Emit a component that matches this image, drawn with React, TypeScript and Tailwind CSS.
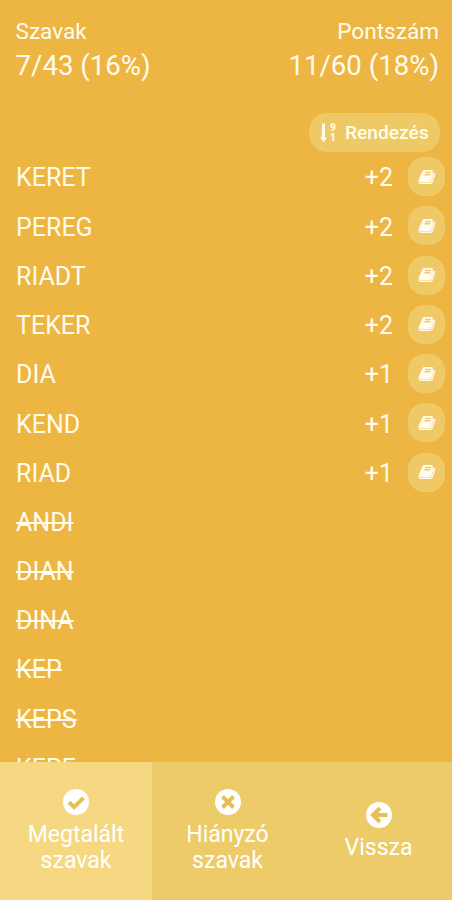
const WORDS = [
  { word: "KERET", points: 2 },
  { word: "PEREG", points: 2 },
  { word: "RIADT", points: 2 },
  { word: "TEKER", points: 2 },
  { word: "DIA", points: 1 },
  { word: "KEND", points: 1 },
  { word: "RIAD", points: 1 },
  { word: "ANDI", points: 0 },
  { word: "DIAN", points: 0 },
  { word: "DINA", points: 0 },
  { word: "KEP", points: 0 },
  { word: "KEPS", points: 0 },
  { word: "KEPE", points: 0 },
];

function BookIcon() {
  return (
    <svg viewBox="0 0 18 16" className="h-4 w-[18px]">
      <path d="M6.300 1h7.400q1.500 0 1.100 1.400L12.500 10.500q-.4 1.400-1.800 1.400H2.400q-1.200 0-1 1.100.3 1 1.500 1h9.300q1.100 0 1.500-1.100l2.700-9.400q1.200.5.9 1.700l-2.500 8.100q-.5 1.700-2.300 1.700H2.900Q.4 15 .4 12.500.5 10.500 1.800 8.200L4.300 2.500Q5 1 6.300 1z" fill="currentColor" />
      <path d="M2 12.800h10.500l2.700-9" fill="none" stroke="currentColor" strokeWidth="1.500" />
      <path d="M7.300 3.600h5.600M6.600 5.800h5.600" stroke="#efc965" strokeWidth="1.500" />
    </svg>
  );
}

function SortIcon() {
  return (
    <span className="flex h-5 w-[17px] items-center gap-[3px]">
      <svg viewBox="0 0 7 20" className="h-5 w-[7px] fill-current">
        <path d="M2 .5h3v14h2.200L3.500 19 0 14.500h1.800z" />
      </svg>
      <span className="flex flex-col text-[10px] leading-[10px] font-black">
        <span>9</span>
        <span>1</span>
      </span>
    </span>
  );
}

// White disc with a darker glyph on top, shared by the three nav buttons
function CircleIcon({ d }: { d: string }) {
  return (
    <svg viewBox="0 0 26 26" className="size-[26px]">
      <circle cx="13" cy="13" r="13" fill="currentColor" />
      <path d={d} fill="none" stroke="#e8bf57" strokeWidth="4" />
    </svg>
  );
}

export default function App() {
  return (
    <div className="flex h-[900px] w-[452px] flex-col overflow-hidden bg-[#edb541] font-[Roboto,sans-serif] text-[#fffcee]">
      <header className="flex shrink-0 justify-between pt-[18px] pr-[13px] pl-[15.5px]">
        <div>
          <div className="text-[22.6px] leading-7">Szavak</div>
          <div className="text-[27.6px] leading-10">7/43 (16%)</div>
        </div>
        <div className="text-right">
          <div className="text-[22.6px] leading-7">Pontszám</div>
          <div className="text-[27.6px] leading-10">11/60 (18%)</div>
        </div>
      </header>

      <div className="mt-[27px] flex shrink-0 justify-end pr-[12px]">
        <button className="flex h-[39px] w-[131px] items-center gap-[8px] rounded-[18px] bg-[#efc965] pl-[11px] text-[19.2px]">
          <SortIcon />
          <span className="pt-px font-medium">Rendezés</span>
        </button>
      </div>

      <main className="min-h-0 flex-1 overflow-hidden">
        {WORDS.map(({ word, points }) => (
          <div key={word} className="flex h-[49.25px] items-center pr-[7px] pl-4 text-[25px]">
            <span className={points ? "pt-[3px]" : "pt-[2px] line-through decoration-2"}>{word}</span>
            {points > 0 && (
              <>
                <span className="mr-[15px] ml-auto pt-[3px]">+{points}</span>
                <button className="flex h-[39px] w-[37px] items-center justify-center rounded-[16px] bg-[#efc965]">
                  <BookIcon />
                </button>
              </>
            )}
          </div>
        ))}
      </main>

      <nav className="grid h-[138px] shrink-0 grid-cols-[152px_151px_149px] bg-[#eecb69] text-center text-[23px] leading-[26px] text-white">
        <button className="flex flex-col items-center justify-center gap-[7px] bg-[#f6d882] pt-px">
          <CircleIcon d="M6 13.200l5 5L20.500 8.800" />
          <span>Megtalált<br />szavak</span>
        </button>
        <button className="flex flex-col items-center justify-center gap-[7px] pt-px">
          <CircleIcon d="M7.500 7.500l11 11M18.500 7.500l-11 11" />
          <span>Hiányzó<br />szavak</span>
        </button>
        <button className="flex flex-col items-center justify-center gap-[7px] pt-px pl-0.5">
          <CircleIcon d="M14 6l-7 7 7 7M7 13h14.500" />
          <span>Vissza</span>
        </button>
      </nav>
    </div>
  );
}
